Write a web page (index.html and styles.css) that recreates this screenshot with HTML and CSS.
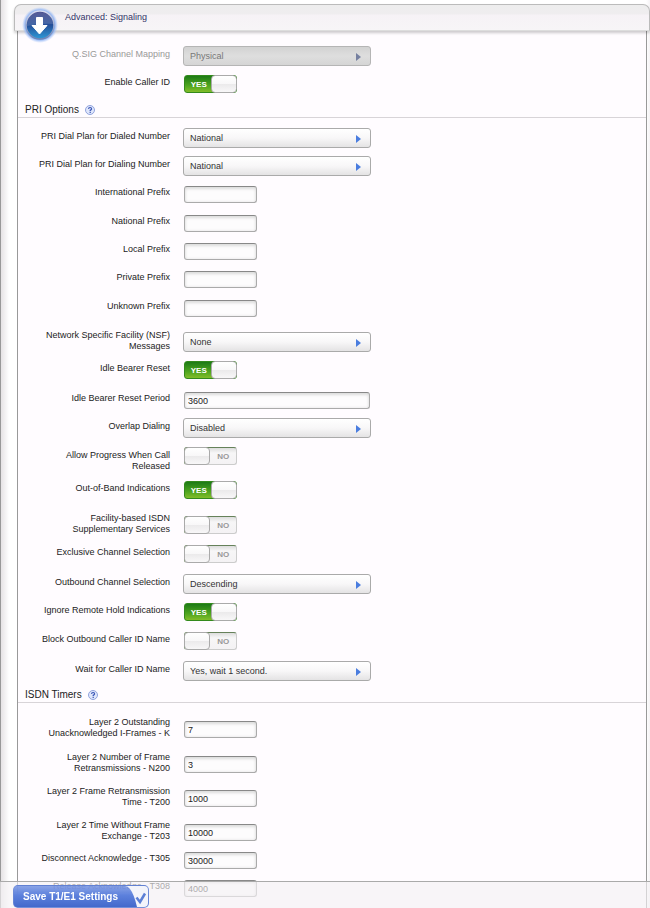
FILE: index.html
```html
<!DOCTYPE html>
<html lang="en">
<head>
<meta charset="utf-8">
<meta name="viewport" content="width=device-width, initial-scale=1">
<title>T1/E1 Settings</title>
<link rel="stylesheet" href="styles.css">
</head>
<body>
<main class="page">
  <header class="panel-header">
    <svg class="header-icon" viewBox="0 0 36 36" aria-hidden="true">
      <defs>
        <radialGradient id="glow"><stop offset="0.8" stop-color="#7ba7f2"/><stop offset="1" stop-color="#a9c6fa" stop-opacity="0"/></radialGradient>
        <linearGradient id="ball" x1="0" y1="0" x2="0" y2="1"><stop offset="0" stop-color="#3c3f84"/><stop offset="0.5" stop-color="#254f99"/><stop offset="1" stop-color="#2e9ad8"/></linearGradient>
        <linearGradient id="rim" x1="0" y1="0" x2="0" y2="1"><stop offset="0" stop-color="#d8dcf0"/><stop offset="1" stop-color="#6d83b4"/></linearGradient>
      </defs>
      <circle cx="18" cy="18" r="18" fill="url(#glow)"/>
      <circle cx="18" cy="18" r="14" fill="url(#ball)" stroke="url(#rim)" stroke-width="1.5"/>
      <path d="M5 19a13 13 0 0 1 26-2Q20 16 5 19Z" fill="#fff" opacity="0.14"/>
      <path d="M14.500 10.500h6v8h4.500L17.500 27l-7.500-8.500h4.500Z" fill="#fff" stroke="#fff" stroke-linejoin="round"/>
    </svg>
    <h1 class="panel-title">Advanced: Signaling</h1>
  </header>

  <form class="panel" id="signaling">
    <div class="row row--disabled"><label for="qsig">Q.SIG Channel Mapping</label><span class="select"><select id="qsig" disabled><option>Physical</option></select></span></div>
    <div class="row"><label for="callerid">Enable Caller ID</label><span class="switch"><input type="checkbox" id="callerid" checked><span class="on">YES</span><span class="off">NO</span><span class="knob"></span></span></div>

    <h2 class="section">PRI Options <svg class="help" viewBox="0 0 10 10" aria-hidden="true"><circle cx="5" cy="5" r="4.500" fill="#dfe6fb" stroke="#91a3dc"/><path d="M3.500 3.900Q3.600 2.500 5.100 2.500T6.600 3.900Q6.500 4.700 5.200 5.400v.8M5.200 7v1" fill="none" stroke="#3a55b5" stroke-width="1.200"/></svg></h2>

    <div class="row"><label for="dialed">PRI Dial Plan for Dialed Number</label><span class="select"><select id="dialed"><option>National</option></select></span></div>
    <div class="row"><label for="dialing">PRI Dial Plan for Dialing Number</label><span class="select"><select id="dialing"><option>National</option></select></span></div>
    <div class="row"><label for="intl">International Prefix</label><input class="text" type="text" id="intl"></div>
    <div class="row row--loose"><label for="natl">National Prefix</label><input class="text" type="text" id="natl"></div>
    <div class="row"><label for="local">Local Prefix</label><input class="text" type="text" id="local"></div>
    <div class="row"><label for="private">Private Prefix</label><input class="text" type="text" id="private"></div>
    <div class="row row--loose"><label for="unknown">Unknown Prefix</label><input class="text" type="text" id="unknown"></div>
    <div class="row row--double"><label for="nsf">Network Specific Facility (NSF) Messages</label><span class="select"><select id="nsf"><option>None</option></select></span></div>
    <div class="row"><label for="idle">Idle Bearer Reset</label><span class="switch"><input type="checkbox" id="idle" checked><span class="on">YES</span><span class="off">NO</span><span class="knob"></span></span></div>
    <div class="row row--roomy"><label for="period">Idle Bearer Reset Period</label><input class="text text--wide" type="text" id="period" value="3600"></div>
    <div class="row"><label for="overlap">Overlap Dialing</label><span class="select"><select id="overlap"><option>Disabled</option></select></span></div>
    <div class="row row--top"><label for="progress">Allow Progress When Call Released</label><span class="switch"><input type="checkbox" id="progress"><span class="on">YES</span><span class="off">NO</span><span class="knob"></span></span></div>
    <div class="row"><label for="oob">Out-of-Band Indications</label><span class="switch"><input type="checkbox" id="oob" checked><span class="on">YES</span><span class="off">NO</span><span class="knob"></span></span></div>
    <div class="row row--double row--loose"><label for="facility">Facility-based ISDN Supplementary Services</label><span class="switch"><input type="checkbox" id="facility"><span class="on">YES</span><span class="off">NO</span><span class="knob"></span></span></div>
    <div class="row row--loose"><label for="exclusive">Exclusive Channel Selection</label><span class="switch"><input type="checkbox" id="exclusive"><span class="on">YES</span><span class="off">NO</span><span class="knob"></span></span></div>
    <div class="row row--roomy"><label for="outbound">Outbound Channel Selection</label><span class="select"><select id="outbound"><option>Descending</option></select></span></div>
    <div class="row"><label for="hold">Ignore Remote Hold Indications</label><span class="switch"><input type="checkbox" id="hold" checked><span class="on">YES</span><span class="off">NO</span><span class="knob"></span></span></div>
    <div class="row row--loose"><label for="block">Block Outbound Caller ID Name</label><span class="switch"><input type="checkbox" id="block"><span class="on">YES</span><span class="off">NO</span><span class="knob"></span></span></div>
    <div class="row row--roomy"><label for="wait">Wait for Caller ID Name</label><span class="select"><select id="wait"><option>Yes, wait 1 second.</option></select></span></div>

    <h2 class="section section--timers">ISDN Timers <svg class="help" viewBox="0 0 10 10" aria-hidden="true"><circle cx="5" cy="5" r="4.500" fill="#dfe6fb" stroke="#91a3dc"/><path d="M3.500 3.900Q3.600 2.500 5.100 2.500T6.600 3.900Q6.500 4.700 5.200 5.400v.8M5.200 7v1" fill="none" stroke="#3a55b5" stroke-width="1.200"/></svg></h2>

    <div class="row row--double"><label for="k">Layer 2 Outstanding Unacknowledged I-Frames - K</label><input class="text" type="text" id="k" value="7"></div>
    <div class="row row--double row--loose"><label for="n200">Layer 2 Number of Frame Retransmissions - N200</label><input class="text" type="text" id="n200" value="3"></div>
    <div class="row row--double"><label for="t200">Layer 2 Frame Retransmission Time - T200</label><input class="text" type="text" id="t200" value="1000"></div>
    <div class="row row--double"><label for="t203">Layer 2 Time Without Frame Exchange - T203</label><input class="text" type="text" id="t203" value="10000"></div>
    <div class="row"><label for="t305">Disconnect Acknowledge - T305</label><input class="text" type="text" id="t305" value="30000"></div>
    <div class="row"><label for="t308">Release Acknowledge - T308</label><input class="text" type="text" id="t308" value="4000"></div>
  </form>
</main>

<footer class="savebar">
  <button class="save" type="submit" form="signaling">
    <span>Save T1/E1 Settings</span>
    <svg class="save-tab" viewBox="0 0 25 21" aria-hidden="true">
      <path d="M2 0H21Q25 0 25 4V17Q25 21 21 21H14Q11 8 7 3Q5 0 2 0Z" fill="#f3f4fb"/>
      <path d="M13.500 11.500l3.500 4.500L22 7.500" fill="none" stroke="#5b7fd6" stroke-width="2.500"/>
    </svg>
  </button>
</footer>
</body>
</html>
```
FILE: styles.css
```css
* {
  box-sizing: border-box;
}

body {
  margin: 0;
  font: 9px/11px "Liberation Sans", Arial, sans-serif;
  color: #222;
  background: #fff;
}

.page {
  display: flex;
  flex-direction: column;
  min-height: 100vh;
  padding: 4px 0 0 13px;
  border-left: 1px solid #999;
  background: linear-gradient(90deg, #e6e3e5, #fff 8px, #fff calc(100% - 4px), #f5f3f5 100%);
}

.panel-header {
  position: relative;
  z-index: 1;
  display: flex;
  align-items: flex-start;
  gap: 7px;
  height: 27px;
  padding-left: 7px;
  border: 1px solid #bbb;
  border-bottom-color: #ddd;
  border-radius: 7px 7px 0 0;
  background: linear-gradient(#ededed, #efedef 9px, #f6f2f6 10px, #f7f5f7);
  box-shadow: 0 2px 3px rgba(0, 0, 0, 0.2);
}

.header-icon {
  flex: none;
  width: 36px;
  height: 36px;
  margin-top: 2px;
}

.panel-title {
  margin: 7px 0 0;
  font-size: 9px;
  font-weight: 400;
  line-height: 11px;
  color: #336;
}

.panel {
  flex: 1;
  margin: 0 3px;
  padding-top: 11px;
  border: solid #999;
  border-width: 0 1px;
  background: #fffcff;
}

.row {
  display: grid;
  grid-template-columns: 138px 1fr;
  column-gap: 13px;
  align-items: center;
  min-height: 28px;
  padding-left: 14px;
}

.row label {
  padding-bottom: 3px;
  text-align: right;
}

.row--disabled label {
  color: #999;
}

.row--loose {
  padding-top: 1px;
  min-height: 29px;
}

.row--roomy {
  padding-top: 2px;
  min-height: 30px;
}

.row--double {
  height: 34px;
  padding-top: 6px;
}

.row--double.row--loose {
  height: 35px;
  padding-top: 7px;
}

.row--top {
  align-items: start;
  height: 34px;
  padding-top: 5px;
}

.row--top label {
  padding-top: 3px;
}

.section {
  display: flex;
  align-items: flex-end;
  gap: 6px;
  margin: 0 0 6px;
  height: 20px;
  padding: 0 7px 2px;
  border-bottom: 1px solid #d8d4d8;
  font-size: 10px;
  font-weight: 400;
  line-height: 11px;
}

.section--timers {
  height: 18px;
}

.help {
  width: 10px;
  height: 10px;
}

.select {
  position: relative;
  width: 188px;
  max-width: 100%;
  height: 20px;
}

.select::after {
  content: "";
  position: absolute;
  top: 7px;
  right: 10px;
  border: solid transparent;
  border-width: 4px 0 4px 5px;
  border-left-color: #4a7ddf;
  pointer-events: none;
}

.select select {
  display: block;
  width: 100%;
  height: 100%;
  padding: 1px 20px 0 6px;
  appearance: none;
  border: 1px solid #aaa;
  border-radius: 3px;
  background: linear-gradient(#fff, #f8f7f8 50%, #e4e3e4);
  font: inherit;
  color: #333;
}

.select select:disabled {
  border-color: #b5b5b5;
  background: linear-gradient(#d2d2d2, #dedede 50%, #d5d5d5);
  color: #777;
  opacity: 1;
}

.row--disabled .select::after {
  border-left-color: #7680a0;
}

.text {
  width: 73px;
  height: 17px;
  margin-left: 1px;
  padding: 1px 3px 0;
  border: 1px solid #aaa;
  border-top-color: #888;
  border-radius: 3px;
  background: #fdfcfd;
  box-shadow: inset 0 2px 3px #ddd, inset 0 0 3px #e3e3e3;
  font: inherit;
  color: #222;
}

.text--wide {
  width: 186px;
  max-width: 100%;
}

.switch {
  position: relative;
  display: grid;
  grid-template-columns: 1fr 1fr;
  align-items: center;
  width: 53px;
  height: 18px;
  margin-left: 1px;
  border: 1px solid #ccc;
  border-top-color: #66815a;
  border-left-color: #7c9470;
  border-radius: 3px;
  background: linear-gradient(#ddd, #f7f6f7 5px, #f4f2f4);
  font-size: 8px;
  font-weight: 700;
  text-align: center;
}

.switch:has(input:checked) {
  border-color: #338a1c;
  background: linear-gradient(#1d7a16, #4fa51f 60%, #82bd2a);
}

.switch input {
  position: absolute;
  inset: 0;
  z-index: 2;
  width: 100%;
  height: 100%;
  margin: 0;
  opacity: 0;
}

.switch .on {
  visibility: hidden;
  padding-left: 2px;
  color: #fff;
}

.switch .off {
  color: #999;
}

.switch input:checked ~ .on {
  visibility: visible;
}

.switch input:checked ~ .off {
  visibility: hidden;
}

.knob {
  position: absolute;
  top: -1px;
  left: -1px;
  width: 26px;
  height: 18px;
  border: 1px solid #aaa;
  border-radius: 4px;
  background: linear-gradient(#fff, #f8f7f8 50%, #ebeaeb 51%, #f8f7f8);
}

.switch input:checked ~ .knob {
  right: -1px;
  left: auto;
}

.savebar {
  position: fixed;
  right: 0;
  bottom: 0;
  left: 0;
  z-index: 3;
  display: flex;
  height: 27px;
  padding: 3px 0 0 13px;
  border-top: 1px solid #aaa;
  background: rgba(245, 241, 245, 0.65);
}

.save {
  display: flex;
  align-items: center;
  gap: 5px;
  height: 23px;
  padding: 0 0 0 9px;
  border: 1px solid rgba(110, 138, 214, 0.7);
  border-radius: 5px;
  background: linear-gradient(rgba(110, 142, 226, 0.8), #5c80dc 45%, #4469cc);
  font: bold 10px/12px "Liberation Sans", Arial, sans-serif;
  color: #fff;
}

.save-tab {
  width: 25px;
  height: 21px;
}
```
